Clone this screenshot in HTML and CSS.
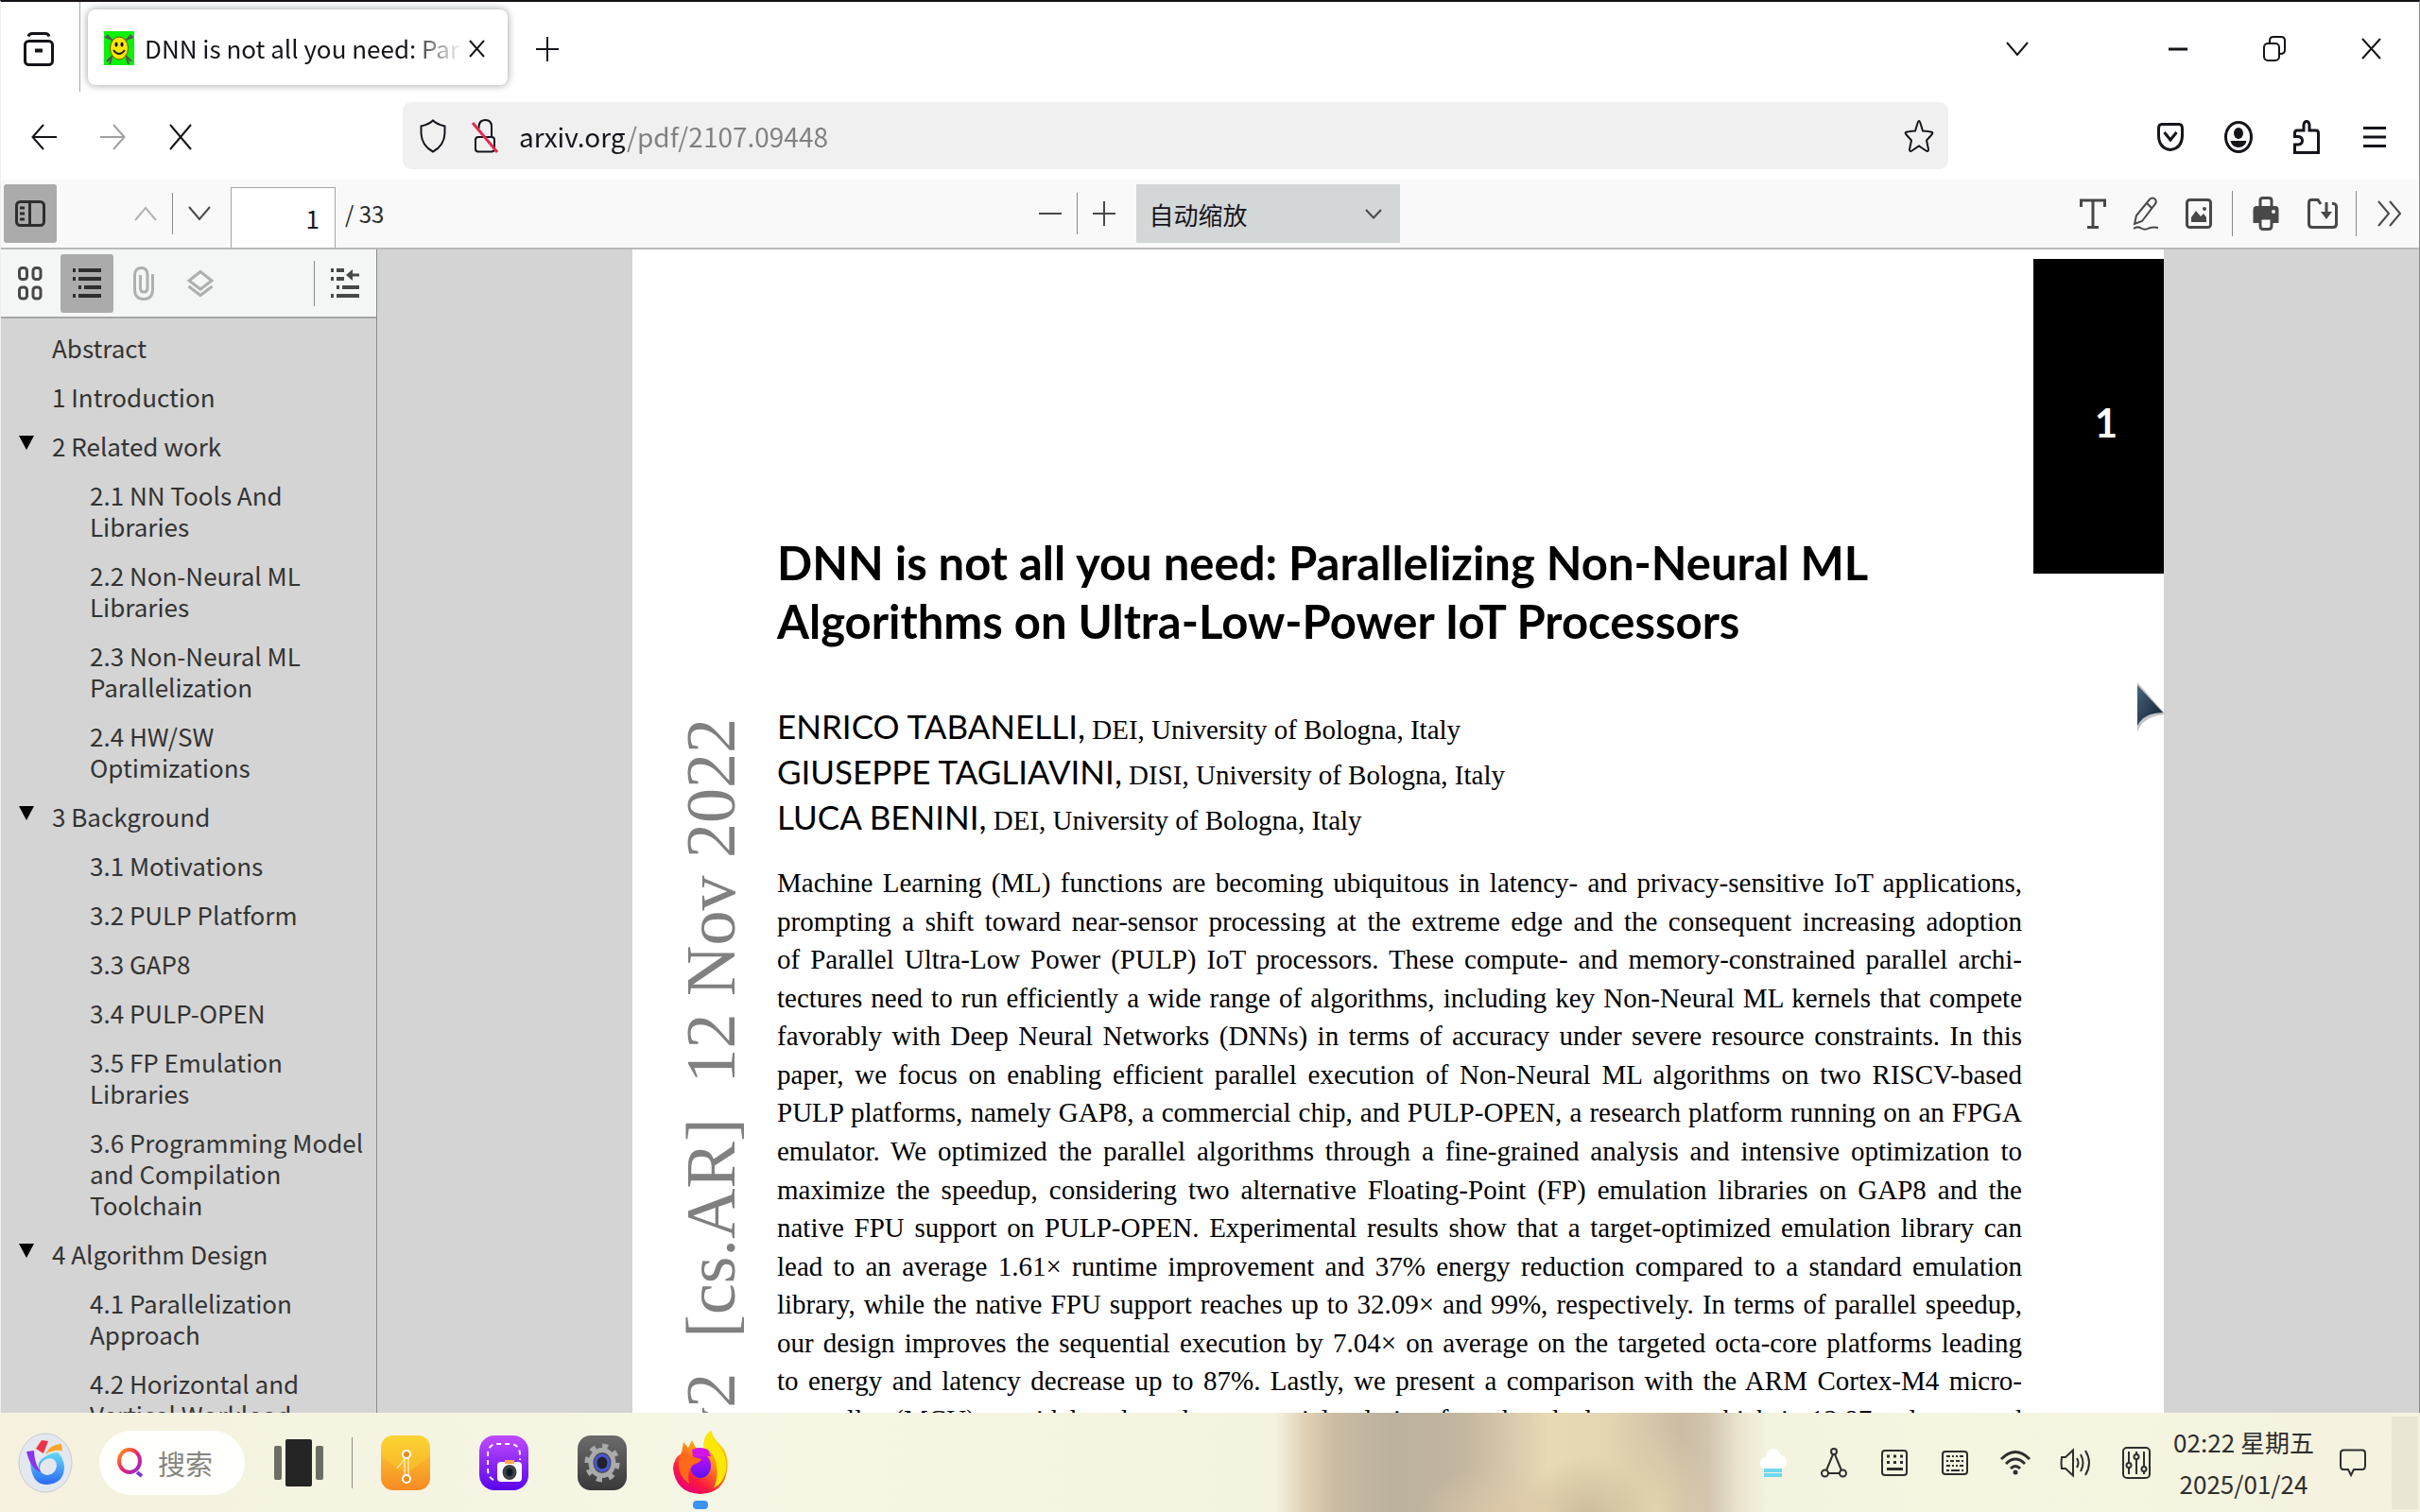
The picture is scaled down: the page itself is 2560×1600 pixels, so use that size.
FILE: index.html
```html
<!DOCTYPE html>
<html lang="zh-CN">
<head>
<meta charset="utf-8">
<title>DNN is not all you need: Parallelizing Non-Neural ML</title>
<link rel="stylesheet" href="styles.css">
</head>
<body>
<div class="window">
  <header class="tabbar">
    <button class="btn btn-view" aria-label="Firefox View"><svg class="i i-view" viewBox="0 0 32 36"><path d="M5 4.500Q6 1.500 9 1.500H23Q26 1.500 27 4.500" /><rect x="1.500" y="9.500" width="29" height="25" rx="4"/><path d="M12 19.500h8" stroke-width="4"/></svg></button>
    <div class="tab">
      <svg class="favicon" viewBox="0 0 32 36"><rect width="32" height="36" fill="#0df20d"/><path d="M3 4l6 6M29 4l-6 6M3 32l6-6M29 32l-6-6M1 6l5 2M31 6l-5 2M6 35l2-7M26 35l-2-7" stroke="#555" stroke-width="2"/><ellipse cx="16" cy="18" rx="9.500" ry="12" fill="#fce603" stroke="#665500" stroke-width="1"/><ellipse cx="13" cy="14" rx="1.500" ry="2.500"/><ellipse cx="19" cy="14" rx="1.500" ry="2.500"/><path d="M10 20q6 8 12 0" fill="none" stroke="#222" stroke-width="2"/></svg>
      <span class="tab-title">DNN is not all you need: Para</span>
      <button class="tab-close" aria-label="Close tab"><svg class="i i-x" viewBox="0 0 17 19"><path d="M1 1l15 17M16 1L1 18"/></svg></button>
    </div>
    <button class="btn btn-new" aria-label="New tab"><svg class="i i-plus" viewBox="0 0 24 28"><path d="M12 1v26M0 14h24"/></svg></button>
    <div class="window-controls">
      <button class="btn btn-tabs" aria-label="List tabs"><svg class="i i-chev" viewBox="0 0 24 16"><path d="M1 1l11 13L23 1"/></svg></button>
      <button class="btn btn-win" aria-label="Minimize"><svg class="i i-min" viewBox="0 0 20 4"><path d="M0 2h20"/></svg></button>
      <button class="btn btn-win" aria-label="Restore"><svg class="i i-restore" viewBox="0 0 24 27"><rect x="1" y="8" width="16" height="18" rx="4"/><path d="M7 7V5Q7 1 11 1H19Q23 1 23 5V15Q23 19 18 19"/></svg></button>
      <button class="btn btn-win" aria-label="Close"><svg class="i i-wx" viewBox="0 0 21 23"><path d="M1 1l19 21M20 1L1 22"/></svg></button>
    </div>
  </header>

  <nav class="navbar">
    <div class="nav-left">
      <button class="btn btn-nav" aria-label="Back"><svg class="i i-arrow" viewBox="0 0 28 28"><path d="M27 14H2M13 1L1.500 14 13 27"/></svg></button>
      <button class="btn btn-nav dim" aria-label="Forward"><svg class="i i-arrow" viewBox="0 0 28 28"><path d="M1 14H26M15 1L26.500 14 15 27"/></svg></button>
      <button class="btn btn-nav" aria-label="Stop"><svg class="i i-stop" viewBox="0 0 24 28"><path d="M1 1l22 26M23 1L1 27"/></svg></button>
    </div>
    <div class="urlbar">
      <svg class="i i-shield" viewBox="0 0 28 36"><path d="M14 1.500Q18 5.500 26.500 7.500V15Q26 28 14 34.500Q2 28 1.500 15V7.500Q10 5.500 14 1.500z"/></svg>
      <svg class="i i-lock" viewBox="0 0 30 38"><rect x="5" y="20" width="20" height="15.500" rx="3"/><path d="M8.500 11V9Q9 2 15.500 2Q22 2 22 9V19"/><path d="M2 5L28 36" stroke="#e22850" stroke-width="3"/></svg>
      <input class="url" type="text" aria-label="Address" value="arxiv.org/pdf/2107.09448">
      <button class="btn btn-star" aria-label="Bookmark"><svg class="i i-star" viewBox="0 0 32 36"><path d="M16 2Q17 2 18 6L20 12.500Q27 13 30 14Q31 15 29 17L24 22.500L26 32Q26 35 23.500 33.500L16 28.500L8.500 33.500Q6 35 6 32L8 22.500L3 17Q1 15 2 14Q5 13 12 12.500L14 6Q15 2 16 2z"/></svg></button>
    </div>
    <div class="nav-right">
      <button class="btn btn-nav" aria-label="Pocket"><svg class="i i-pocket" viewBox="0 0 28 30"><path d="M5 1.500H23Q26.500 1.500 26.500 6V14Q26 27 14 28.500Q2 27 1.500 14V6Q1.500 1.500 5 1.500z"/><path d="M7.500 10L14 18l6.500-8"/></svg></button>
      <button class="btn btn-nav" aria-label="Account"><svg class="i i-acct" viewBox="0 0 30 34"><ellipse cx="15" cy="17" rx="13.500" ry="15.500"/><ellipse cx="15" cy="13" rx="5" ry="6" fill="currentColor" stroke="none"/><path d="M6.500 21h17Q22 28 15 28Q8 28 6.500 21z" fill="currentColor" stroke="none"/></svg></button>
      <button class="btn btn-nav" aria-label="Extensions"><svg class="i i-ext" viewBox="0 0 28 36"><path d="M4 11H11V5Q11.500 1.500 14 1.500Q16.500 1.500 17 5V11H24Q26.500 11 26.500 14V34.500H1.500V26H5Q9.500 25.500 9.500 22Q9.500 18 5 17.500H1.500V14Q1.500 11 4 11z"/></svg></button>
      <button class="btn btn-nav" aria-label="Menu"><svg class="i i-menu" viewBox="0 0 24 22"><path d="M0 1.500h24M0 11h24M0 20.500h24"/></svg></button>
    </div>
  </nav>

  <div class="pdfbar">
    <div class="bar-left">
      <button class="tool on" aria-label="Toggle sidebar"><svg class="i i-side" viewBox="0 0 32 28"><rect x="1.500" y="1.500" width="29" height="25" rx="4"/><path d="M15.500 1v26M5 8h5M5 14h5M5 20h5"/></svg></button>
      <span class="spring"></span>
      <button class="tool dim" aria-label="Previous page"><svg class="i i-chev" viewBox="0 0 24 16"><path d="M1 15L12 2l11 13"/></svg></button>
      <i class="sep"></i>
      <button class="tool" aria-label="Next page"><svg class="i i-chev" viewBox="0 0 24 16"><path d="M1 1l11 13L23 1"/></svg></button>
      <input class="page-no" type="text" id="pageNo" value="1">
      <label class="page-total" for="pageNo">/ 33</label>
    </div>
    <div class="bar-mid">
      <button class="tool" aria-label="Zoom out"><svg class="i i-minus" viewBox="0 0 24 28"><path d="M0 14h24"/></svg></button>
      <i class="sep"></i>
      <button class="tool" aria-label="Zoom in"><svg class="i i-plus" viewBox="0 0 24 28"><path d="M12 1v26M0 14h24"/></svg></button>
      <span class="zoom">
        <select aria-label="缩放"><option>自动缩放</option></select>
        <svg class="i i-caret" viewBox="0 0 18 11"><path d="M1 1l8 8.500L17 1"/></svg>
      </span>
    </div>
    <div class="bar-right">
      <button class="tool" aria-label="Text"><svg class="i i-text" viewBox="0 0 28 32"><path d="M1.500 9V2H26.500V9M14 2V30M8 30.500h12"/></svg></button>
      <button class="tool" aria-label="Draw"><svg class="i i-pen" viewBox="0 0 28 36"><path d="M4 20L18 3Q21 0 24 3Q26 6 23 9L10 26L2 29zM15 7l5 5"/><path d="M1 34Q5 31 9 33.500T17 33.500Q22 32 27 33"/></svg></button>
      <button class="tool" aria-label="Image"><svg class="i i-img" viewBox="0 0 28 32"><rect x="1.500" y="1.500" width="25" height="29" rx="3"/><path d="M6 25V20L11 13l5 6 3-3 3 4V25z" fill="currentColor" stroke="none"/><circle cx="20" cy="11" r="2" fill="currentColor" stroke="none"/></svg></button>
      <i class="sep tall"></i>
      <button class="tool" aria-label="Print"><svg class="i i-print" viewBox="0 0 28 36"><path d="M4 10H24Q27.500 10 27.500 14V28H0.500V14Q0.500 10 4 10z" fill="currentColor" stroke="none"/><path d="M8 10V4Q8 1.500 11 1.500H17Q20 1.500 20 4V10"/><path d="M8 23H20V31Q20 34.500 17 34.500H11Q8 34.500 8 31z" fill="#f9f9fa"/><circle cx="22" cy="16" r="2" fill="#f9f9fa" stroke="none"/></svg></button>
      <button class="tool tool-save" aria-label="Save"><svg class="i i-save" viewBox="0 0 32 32"><path d="M14 6L11 1.500H4Q1.500 1.500 1.500 5V27Q1.500 30.500 5 30.500H27Q30.500 30.500 30.500 27V9Q30.500 5 26 5.500M20 4V18"/><path d="M14 14L20 22l6-8z" fill="currentColor" stroke="none"/></svg></button>
      <i class="sep tall"></i>
      <button class="tool" aria-label="Tools"><svg class="i i-more" viewBox="0 0 26 28"><path d="M1 1l11 13L1 27M13 1l11 13L13 27"/></svg></button>
    </div>
  </div>

  <div class="main">
    <aside class="sidebar">
      <div class="sidebar-bar">
        <button class="tool" aria-label="Thumbnails"><svg class="i i-thumb" viewBox="0 0 26 36"><rect x="1.500" y="1.500" width="8" height="12" rx="3"/><rect x="16" y="1.500" width="8" height="12" rx="3"/><rect x="1.500" y="22" width="8" height="12" rx="3"/><rect x="16" y="22" width="8" height="12" rx="3"/></svg></button>
        <button class="tool on" aria-label="Outline"><svg class="i i-list" viewBox="0 0 30 34"><path d="M0 3h3M6 3h24M0 12h3M6 12h24M6 21h3M12 21h18M0 30h3M6 30h24" stroke-width="4"/></svg></button>
        <button class="tool dim" aria-label="Attachments"><svg class="i i-clip" viewBox="0 0 22 36"><path d="M20.500 8V25Q20 34.500 11 34.500Q2 34.500 1.500 25V9Q2 1.500 8.500 1.500Q15 1.500 15 9V23Q15 27 11 27Q7.500 27 7.500 23V9"/></svg></button>
        <button class="tool dim" aria-label="Layers"><svg class="i i-layers" viewBox="0 0 28 28"><path d="M14 1.500L26 11 14 20 2 11zM1.500 17L14 26.500 26.500 17"/></svg></button>
        <span class="spring"></span>
        <i class="sep tall"></i>
        <button class="tool" aria-label="Current outline item"><svg class="i i-list" viewBox="0 0 30 34"><path d="M0 3h3M6 3h8M0 12h3M6 12h8M6 21h3M12 21h18M0 30h3M6 30h24" stroke-width="4"/><path d="M20 8h10" /><path d="M23 2l-7 6 7 6z" fill="currentColor" stroke="none"/></svg></button>
      </div>
      <ul class="outline">
        <li><a href="#s0">Abstract</a></li>
        <li><a href="#s1">1 Introduction</a></li>
        <li class="open"><a href="#s2">2 Related work</a>
          <ul>
            <li><a href="#s21">2.1 NN Tools And Libraries</a></li>
            <li><a href="#s22">2.2 Non-Neural ML Libraries</a></li>
            <li><a href="#s23">2.3 Non-Neural ML Parallelization</a></li>
            <li><a href="#s24">2.4 HW/SW Optimizations</a></li>
          </ul>
        </li>
        <li class="open"><a href="#s3">3 Background</a>
          <ul>
            <li><a href="#s31">3.1 Motivations</a></li>
            <li><a href="#s32">3.2 PULP Platform</a></li>
            <li><a href="#s33">3.3 GAP8</a></li>
            <li><a href="#s34">3.4 PULP-OPEN</a></li>
            <li><a href="#s35">3.5 FP Emulation Libraries</a></li>
            <li><a href="#s36">3.6 Programming Model and Compilation Toolchain</a></li>
          </ul>
        </li>
        <li class="open"><a href="#s4">4 Algorithm Design</a>
          <ul>
            <li><a href="#s41">4.1 Parallelization Approach</a></li>
            <li><a href="#s42">4.2 Horizontal and Vertical Workload</a></li>
          </ul>
        </li>
      </ul>
    </aside>

    <main class="viewer">
      <article class="page">
        <div class="stamp">v2&nbsp; [cs.AR]&nbsp; 12 Nov 2022</div>
        <div class="paper">
          <h1>DNN is not all you need: Parallelizing Non-Neural ML<br>Algorithms on Ultra-Low-Power IoT Processors</h1>
          <div class="authors">
            <p><b>ENRICO TABANELLI,</b> DEI, University of Bologna, Italy</p>
            <p><b>GIUSEPPE TAGLIAVINI,</b> DISI, University of Bologna, Italy</p>
            <p><b>LUCA BENINI,</b> DEI, University of Bologna, Italy</p>
          </div>
          <div class="abstract">
            <span>Machine Learning (ML) functions are becoming ubiquitous in latency- and privacy-sensitive IoT applications,</span>
            <span>prompting a shift toward near-sensor processing at the extreme edge and the consequent increasing adoption</span>
            <span>of Parallel Ultra-Low Power (PULP) IoT processors. These compute- and memory-constrained parallel archi-</span>
            <span>tectures need to run efficiently a wide range of algorithms, including key Non-Neural ML kernels that compete</span>
            <span>favorably with Deep Neural Networks (DNNs) in terms of accuracy under severe resource constraints. In this</span>
            <span>paper, we focus on enabling efficient parallel execution of Non-Neural ML algorithms on two RISCV-based</span>
            <span>PULP platforms, namely GAP8, a commercial chip, and PULP-OPEN, a research platform running on an FPGA</span>
            <span>emulator. We optimized the parallel algorithms through a fine-grained analysis and intensive optimization to</span>
            <span>maximize the speedup, considering two alternative Floating-Point (FP) emulation libraries on GAP8 and the</span>
            <span>native FPU support on PULP-OPEN. Experimental results show that a target-optimized emulation library can</span>
            <span>lead to an average 1.61× runtime improvement and 37% energy reduction compared to a standard emulation</span>
            <span>library, while the native FPU support reaches up to 32.09× and 99%, respectively. In terms of parallel speedup,</span>
            <span>our design improves the sequential execution by 7.04× on average on the targeted octa-core platforms leading</span>
            <span>to energy and latency decrease up to 87%. Lastly, we present a comparison with the ARM Cortex-M4 micro-</span>
            <span>controller (MCU), a widely adopted commercial solution for edge deployments, which is 12.87× slower and</span>
          </div>
        </div>
        <div class="thumb-index">1</div>
      </article>
    </main>
  </div>

  <svg class="cursor" viewBox="0 0 32 54"><defs><linearGradient id="cur" x2="1" y2="1"><stop offset="0" stop-color="#4a6480"/><stop offset="1" stop-color="#0d1c2c"/></linearGradient></defs><path d="M1 0V53Q6 36 31 34z" fill="#c4c4c4"/><path d="M1 3V46Q8 32 28 32z" fill="url(#cur)"/></svg>
</div>

<footer class="taskbar">
  <svg class="defs" width="0" height="0" aria-hidden="true"><defs>
    <linearGradient id="gBlue" x2="0" y2="1"><stop offset="0" stop-color="#63dcf5"/><stop offset="1" stop-color="#2b66f6"/></linearGradient>
    <linearGradient id="gRing" x2="1" y2="1"><stop offset="0" stop-color="#ff9d0a"/><stop offset=".5" stop-color="#f0206a"/><stop offset="1" stop-color="#8a2be2"/></linearGradient>
    <linearGradient id="gOrange" x2="0" y2="1"><stop offset="0" stop-color="#fbd433"/><stop offset="1" stop-color="#f78a22"/></linearGradient>
    <linearGradient id="gPurple" x2="0" y2="1"><stop offset="0" stop-color="#c04bff"/><stop offset="1" stop-color="#5a06ea"/></linearGradient>
    <linearGradient id="gFox" x1=".9" x2=".3" y2="1"><stop offset="0" stop-color="#ffe800"/><stop offset=".45" stop-color="#ff9412"/><stop offset=".8" stop-color="#fb1840"/><stop offset="1" stop-color="#e8007c"/></linearGradient>
    <linearGradient id="gGrey" x2="0" y2="1"><stop offset="0" stop-color="#6c6c6c"/><stop offset="1" stop-color="#393939"/></linearGradient>
    <linearGradient id="gGlobe" x2="0" y2="1"><stop offset="0" stop-color="#d010e8"/><stop offset="1" stop-color="#5a10ff"/></linearGradient>
  </defs></svg>
  <button class="start" aria-label="Start"><svg viewBox="0 0 58 64"><ellipse cx="29" cy="32" rx="28" ry="31" fill="#e3e7ee" stroke="#c8ccd2"/><path fill-rule="evenodd" d="M13 30Q14 55 30 55Q49 54 49 36Q48 26 42 21Q35 21 28 26Q20 30 22 39L16 33zM30 28Q40 25 41 35Q40 44 31 45Q24 44 23 38Q23 31 30 28z" fill="url(#gBlue)"/><path d="M9 20L17 19Q17 31 24 42Q13 38 9 20z" fill="#8a35ea"/><path d="M19 17L25 8L32 9L27 22z" fill="#ee3348"/><path d="M29 23Q34 12 46 12L47 19Q37 18 29 23z" fill="#f9a52c"/></svg></button>
  <label class="search"><svg viewBox="0 0 28 32"><ellipse cx="13" cy="14" rx="11" ry="12" fill="none" stroke="url(#gRing)" stroke-width="4"/><path d="M21 26l5 4" stroke="#7d33dd" stroke-width="4" fill="none"/></svg><input type="text" placeholder="搜索" aria-label="搜索"></label>
  <button class="taskview" aria-label="Task view"><svg viewBox="0 0 52 50"><rect y="7" width="8" height="36" rx="2" fill="#6d6e62"/><rect x="12" width="28" height="50" rx="2" fill="#252525"/><rect x="44" y="7" width="8" height="36" rx="2" fill="#6d6e62"/></svg></button>
  <i class="task-sep"></i>
  <div class="apps">
    <button aria-label="Archive"><svg class="app" viewBox="0 0 54 60"><rect x="1" y="1" width="52" height="58" rx="13" fill="url(#gOrange)"/><path d="M1 22Q14 34 27 40Q40 34 53 22V14Q53 1 40 1H14Q1 1 1 14z" fill="#fcd732" opacity=".35"/><path d="M26 24V44M30 24V44M25 27l-7 9" stroke="#fff" stroke-width="1" fill="none"/><circle cx="28" cy="21" r="4" fill="#e8891c" stroke="#fff" stroke-width="2"/><circle cx="28" cy="47" r="4" fill="#e8891c" stroke="#fff" stroke-width="2"/></svg></button>
    <button aria-label="Screenshot"><svg class="app" viewBox="0 0 54 60"><rect x="1" y="1" width="52" height="58" rx="16" fill="url(#gPurple)"/><path d="M16 48Q10 45 10 36V20Q11 10 20 10H35Q44 11 44 22V27" fill="none" stroke="#fff" stroke-width="2" stroke-dasharray="5 4"/><rect x="20" y="29" width="26" height="21" rx="4" fill="#fff"/><rect x="28" y="27" width="10" height="4" fill="#ffa94a"/><ellipse cx="33" cy="40" rx="7.500" ry="8" fill="#3c4248"/><ellipse cx="33" cy="40" rx="3.500" ry="4" fill="#0d1b26"/></svg></button>
    <button aria-label="Settings"><svg class="app" viewBox="0 0 54 60"><rect x="1" y="1" width="52" height="58" rx="14" fill="url(#gGrey)"/><ellipse cx="27" cy="30" rx="16" ry="18" fill="none" stroke="#a9aaab" stroke-width="5" stroke-dasharray="6 7.300"/><ellipse cx="27" cy="30" rx="12" ry="13.500" fill="#45484b" stroke="#a9aaab" stroke-width="5"/><ellipse cx="27" cy="30" rx="7" ry="8" fill="#20232a" stroke="#4a55d8" stroke-width="3"/></svg></button>
    <button class="active" aria-label="Firefox"><svg class="fox" viewBox="0 0 60 68"><path d="M10 24L12 12L17 18L21 10L25 18L34 19Q32 6 41 0Q44 9 50 14L55 20Q60 30 58 42Q55 66 30 67Q4 66 1 40Q2 28 10 24z" fill="url(#gFox)"/><path d="M34 19Q32 6 41 0Q44 9 50 16Q59 28 57 42Q53 58 44 60Q50 48 46 32Q42 20 34 19z" fill="#fbe705"/><ellipse cx="30" cy="37" rx="11" ry="13" fill="url(#gGlobe)"/><path d="M21 20Q29 16 38 20L41 27H22z" fill="#d414e6"/><path d="M10 22Q16 26 24 28L31 30Q29 34 22 36Q15 44 18 56Q6 48 7 32z" fill="#ff6a18"/></svg></button>
  </div>
  <span class="spring"></span>
  <div class="tray">
    <button aria-label="Weather"><svg class="i i-cloud" viewBox="0 0 30 32"><path d="M5 22Q0 21 1 16Q2 10 7 10Q8 1 15 1Q22 2 23 8Q29 9 29 15Q29 21 24 22z" fill="#fff" stroke="none"/><path d="M5 24h19M5 29h19" stroke="#6fd8ee" stroke-width="4"/></svg></button>
    <button aria-label="Network share"><svg class="i i-net" viewBox="0 0 28 32"><path d="M13 7L6 24M15 7L22 24M8 27H20"/><circle cx="14" cy="4" r="3"/><circle cx="4.500" cy="27" r="3.500"/><circle cx="23.500" cy="27" r="3.500"/></svg></button>
    <button aria-label="Input method"><svg class="i i-kb" viewBox="0 0 28 28"><rect x="1" y="1" width="26" height="26" rx="3"/><path d="M6 7h3M13 7h3M20 7h3M6 13.500h3M13 13.500h3M20 13.500h3M6 20.500h17" stroke-width="3"/></svg></button>
    <button aria-label="Keyboard"><svg class="i i-kb2" viewBox="0 0 28 26"><rect x="1" y="1" width="26" height="24" rx="3"/><path d="M5 6h4M11 6h2M15 6h2M19 6h4M5 11h2M9 11h4M15 11h4M21 11h2M5 16h4M11 16h2M15 16h2M19 16h4M5 21h3M10 21h9M21 21h2" stroke-width="2"/></svg></button>
    <button aria-label="Wi-Fi"><svg class="i i-wifi" viewBox="0 0 32 26"><path d="M1 9Q16 -6 31 9M6 14Q16 4 26 14M11 19Q16 14 21 19"/><circle cx="16" cy="23" r="2.500" fill="currentColor" stroke="none"/></svg></button>
    <button aria-label="Volume"><svg class="i i-vol" viewBox="0 0 34 30"><path d="M2 9H6L14 1.500V28.500L6 21H2Q1 15 2 9zM18 10Q21 15 18 20M22 6Q27 15 22 24M27 2Q35 15 27 28"/></svg></button>
    <button aria-label="Controls"><svg class="i i-mix" viewBox="0 0 30 34"><rect x="1" y="1" width="28" height="32" rx="4"/><path d="M7 5V17M7 22V29M15 5V8M15 13V29M23 5V21M23 26V29"/><circle cx="7" cy="19.500" r="2.500"/><circle cx="15" cy="10.500" r="2.500"/><circle cx="23" cy="23.500" r="2.500"/></svg></button>
  </div>
  <time class="clock"><span>02:22 星期五</span><span>2025/01/24</span></time>
  <button class="chat" aria-label="Notifications"><svg class="i i-chat" viewBox="0 0 28 30"><path d="M4 1.500H24Q27 1.500 27 5V18Q27 22 24 22H15L12 28L9 22H4Q1 22 1 18V5Q1 1.500 4 1.500z"/></svg></button>
  <button class="desktop" aria-label="Show desktop"></button>
</footer>
</body>
</html>
```
FILE: styles.css
```css
* { box-sizing: border-box; }
html, body { height: 100%; }
body {
  margin: 0;
  display: flex;
  flex-direction: column;
  overflow: hidden;
  color: #15141a;
  background: #fff;
  font-family: "Noto Sans CJK SC", "Noto Sans", sans-serif;
  font-size: 26px;
}
button { border: 0; padding: 0; background: none; color: inherit; font: inherit; }
input, select { font: inherit; color: inherit; border: 0; outline: 0; border-radius: 0; }
svg { display: block; overflow: visible; }
.spring { flex: 1; }

.i { fill: none; stroke: currentColor; stroke-width: 3px; flex: none; }
.i-view { width: 32px; height: 36px; }
.i-x { width: 17px; height: 19px; stroke-width: 2px; }
.i-plus, .i-minus, .i-stop { width: 24px; height: 28px; stroke-width: 2px; }
.i-chev { width: 24px; height: 16px; stroke-width: 2px; }
.i-min { width: 20px; height: 4px; }
.i-restore { width: 24px; height: 27px; stroke-width: 2px; }
.i-wx { width: 21px; height: 23px; stroke-width: 2px; }
.i-arrow { width: 28px; height: 28px; stroke-width: 2px; }
.i-shield { width: 28px; height: 36px; stroke-width: 2px; }
.i-lock { width: 30px; height: 38px; stroke-width: 2px; }
.i-star { width: 32px; height: 36px; stroke-width: 2px; }
.i-pocket { width: 28px; height: 30px; }
.i-acct { width: 30px; height: 34px; }
.i-ext { width: 28px; height: 36px; }
.i-menu { width: 24px; height: 22px; }
.i-side { width: 32px; height: 28px; }
.i-caret { width: 18px; height: 11px; stroke-width: 2px; }
.i-text { width: 28px; height: 32px; }
.i-pen { width: 28px; height: 36px; stroke-width: 2px; }
.i-img { width: 28px; height: 32px; }
.i-print { width: 28px; height: 36px; }
.i-save { width: 32px; height: 32px; }
.i-more { width: 26px; height: 28px; stroke-width: 2px; }
.i-thumb { width: 26px; height: 36px; }
.i-list { width: 30px; height: 34px; }
.i-clip { width: 22px; height: 36px; }
.i-layers { width: 28px; height: 28px; }
.i-cloud { width: 30px; height: 32px; }
.i-net { width: 28px; height: 32px; stroke-width: 2px; }
.i-kb { width: 28px; height: 28px; stroke-width: 2px; }
.i-kb2 { width: 28px; height: 26px; stroke-width: 2px; }
.i-wifi { width: 32px; height: 26px; }
.i-vol { width: 34px; height: 30px; stroke-width: 2px; }
.i-mix { width: 30px; height: 34px; stroke-width: 2px; }
.i-chat { width: 28px; height: 30px; stroke-width: 2px; }

.window {
  flex: 1;
  min-height: 0;
  display: flex;
  flex-direction: column;
  border-top: 2px solid #161218;
  border-left: 1px solid #eeeeee;
  border-right: 1px solid #8a8a8a;
}
.btn, .tool { display: flex; align-items: center; justify-content: center; flex: none; }

/* tab strip */
.tabbar { display: flex; height: 95px; flex: none; }
.tabbar .btn { padding-top: 4px; }
.tabbar .btn-view { width: 84px; border-right: 1px solid #a5a5a8; padding-right: 4px; }
.tab {
  display: flex;
  align-items: center;
  width: 444px;
  height: 80px;
  margin: 8px 0 0 8px;
  padding: 2px 16px 0;
  border-radius: 8px;
  background: #fff;
  box-shadow: 0 0 8px rgba(0, 0, 0, .4);
}
.favicon { width: 34px; height: 36px; flex: none; }
.tab-title {
  flex: 1;
  min-width: 0;
  margin-left: 10px;
  overflow: hidden;
  white-space: nowrap;
  line-height: 40px;
  -webkit-mask-image: linear-gradient(to left, transparent 0, #000 56px);
  mask-image: linear-gradient(to left, transparent 0, #000 56px);
}
.tab-close { display: flex; justify-content: flex-end; width: 32px; padding-right: 8px; }
.btn-new { width: 84px; }
.window-controls { display: flex; margin-left: auto; }
.btn-tabs { width: 60px; margin-right: 89px; }
.btn-win { width: 102px; }

/* navigation */
.navbar { display: grid; grid-template-columns: 425px 1fr 498px; align-items: center; height: 93px; flex: none; }
.nav-left { display: flex; padding: 2px 0 0 10px; }
.nav-right { display: flex; justify-content: flex-end; padding: 2px 11px 0 0; }
.btn-nav { width: 72px; height: 72px; }
.dim { opacity: .4; }
.urlbar {
  display: flex;
  align-items: center;
  height: 71px;
  padding: 0 0 0 18px;
  border-radius: 9px;
  background: #f0f0f1;
}
.i-lock { margin-left: 26px; }
.url {
  flex: 1;
  min-width: 0;
  height: 60px;
  margin-left: 21px;
  padding: 0;
  font-size: 28px;
  color: transparent;
  background: linear-gradient(to right, #15141a 113px, #808082 113px);
  -webkit-background-clip: text;
  background-clip: text;
}
.btn-star { width: 62px; height: 62px; }

/* viewer toolbar */
.pdfbar {
  display: grid;
  grid-template-columns: 1fr auto 1fr;
  align-items: center;
  height: 74px;
  flex: none;
  padding-left: 3px;
  background: #f9f9fa;
  border-bottom: 2px solid #b8b8b8;
  color: #484848;
}
.bar-left, .bar-mid, .bar-right { display: flex; align-items: center; }
.bar-left .spring { flex: 0 0 66px; }
.bar-right { justify-content: flex-end; padding-right: 3px; }
.tool { width: 56px; height: 62px; border-radius: 3px; }
.tool.on { background: #ababab; color: #2e2e2e; }
.tool-save { margin-left: 4px; }
.sep { width: 1px; height: 44px; background: #8a8a8a; flex: none; }
.sep.tall { height: 48px; }
.bar-right .sep { margin: 0 7px; }
.page-no {
  width: 111px;
  height: 64px;
  margin: 8px 0 0 5px;
  padding: 0 16px 0 0;
  text-align: right;
  background: #fff;
  border: 1px solid #a5a5a5;
  border-bottom: 0;
  color: #15141a;
}
.page-total { margin-left: 10px; font-size: 24px; line-height: 40px; color: #2e2e2e; }
.zoom { position: relative; margin-left: 6px; }
.zoom select {
  display: block;
  appearance: none;
  width: 279px;
  height: 62px;
  padding: 0 14px;
  background: #d4d7d8;
  color: #15141a;
}
.i-caret { position: absolute; right: 19px; top: 26px; pointer-events: none; }

/* sidebar */
.main { flex: 1; min-height: 0; display: flex; background: #d4d4d4; }
.sidebar { display: flex; flex-direction: column; width: 398px; flex: none; border-right: 1px solid #8a8a8a; overflow: hidden; }
.sidebar-bar {
  display: flex;
  align-items: center;
  gap: 4px;
  height: 73px;
  flex: none;
  padding: 0 5px 0 3px;
  background: #f4f6f5;
  border-bottom: 2px solid #a5a5a5;
  color: #484848;
}
.outline, .outline ul { list-style: none; margin: 0; padding: 0; }
.outline { padding: 14px 8px 0 54px; flex: 1; min-height: 0; color: #333; line-height: 33px; }
.outline a { display: block; margin-bottom: 19px; color: inherit; text-decoration: none; }
.outline ul { padding-left: 40px; }
.outline .open { position: relative; }
.outline .open::before {
  content: "";
  position: absolute;
  left: -35px;
  top: 6px;
  border: solid transparent;
  border-width: 15px 8px 0;
  border-top-color: #000;
}

/* document */
.viewer { flex: 1; min-width: 0; overflow: hidden; display: flex; justify-content: center; }
.page {
  position: relative;
  display: grid;
  grid-template-columns: 153px 1fr;
  align-items: start;
  width: 75%;
  padding-right: 150px;
  background: #fff;
  color: #000;
  font-family: "Liberation Serif", serif;
  font-size: 29px;
}
.stamp {
  justify-self: start;
  margin: 496px 0 0 46px;
  writing-mode: vertical-rl;
  transform: rotate(180deg);
  white-space: nowrap;
  font-size: 74px;
  line-height: 74px;
  color: #808080;
}
.paper { padding-top: 300px; }
h1 { margin: 0 0 60px; font-family: Lato, sans-serif; font-size: 49px; font-weight: 700; line-height: 62px; white-space: nowrap; }
.authors p { margin: 0; line-height: 48px; }
.authors b { font-family: Lato, sans-serif; font-size: 35px; font-weight: 400; line-height: 36px; }
.abstract { display: grid; grid-auto-rows: 1fr; align-items: center; height: 608px; margin-top: 22px; line-height: 40px; }
.abstract span { text-align: justify; text-align-last: justify; white-space: nowrap; }
.thumb-index {
  position: absolute;
  right: 0;
  top: 10px;
  width: 138px;
  height: 333px;
  padding: 0 0 0 16px;
  background: #000;
  color: #fff;
  font-family: Lato, sans-serif;
  font-size: 42px;
  font-weight: 700;
  line-height: 346px;
  text-align: center;
}
.cursor { position: absolute; left: 2260px; top: 722px; width: 32px; height: 54px; }

/* taskbar */
.taskbar {
  display: flex;
  align-items: center;
  height: 105px;
  flex: none;
  padding-left: 19px;
  color: #2e2e2e;
  background:
    radial-gradient(ellipse 90px 60px at 62% 110%, rgba(222, 200, 168, .9), transparent),
    radial-gradient(ellipse 70px 70px at 65.500% 110%, rgba(200, 182, 152, .9), transparent),
    radial-gradient(ellipse 60px 90px at 68.500% 100%, rgba(228, 215, 175, .8), transparent),
    linear-gradient(to right, #f5f1de 0, #f5f6e5 30%, #f4f3df 52.700%, #dfcfb3 54%, #cabca2 55.200%, #bbb19d 57.500%, #c4b7a0 60.500%, #d8caac 62.500%, #e8dab6 64%, #e2d6b2 66.500%, #d6c8a9 68%, #cbbca4 69.500%, #d2c5ae 70.600%, #ece7d2 72%, #f3f2df 73%, #f4f6e0 80%, #f5f2df 100%);
}
.defs { position: absolute; }
.taskbar button { display: flex; align-items: center; justify-content: center; flex: none; }
.start svg { width: 58px; height: 64px; }
.search {
  display: flex;
  align-items: center;
  width: 154px;
  height: 68px;
  margin-left: 28px;
  padding-left: 19px;
  border-radius: 34px;
  background: #fffffb;
}
.search svg { width: 28px; height: 32px; flex: none; }
.search input { width: 80px; margin-left: 15px; padding: 0; background: none; font-size: 29px; }
.search input::placeholder { color: #85857f; opacity: 1; }
.taskview { margin: 0 30px 0 31px; }
.taskview svg { width: 52px; height: 50px; }
.task-sep { width: 1px; height: 54px; background: #8f8f86; }
.apps { display: flex; margin-left: 4px; }
.apps button { position: relative; width: 104px; height: 105px; }
.app { width: 54px; height: 60px; }
.fox { width: 60px; height: 68px; }
.apps .active::after { content: ""; position: absolute; left: 44px; bottom: 3px; width: 16px; height: 9px; border-radius: 4px; background: #3c92f8; }
.tray { display: flex; }
.tray button { width: 64px; }
.clock { display: flex; flex-direction: column; align-items: center; width: 163px; line-height: 44px; }
.chat { width: 68px; }
.desktop { width: 28px; height: 98px; margin: 0 2px 0 7px; background: #e9e6d6 !important; }
```
